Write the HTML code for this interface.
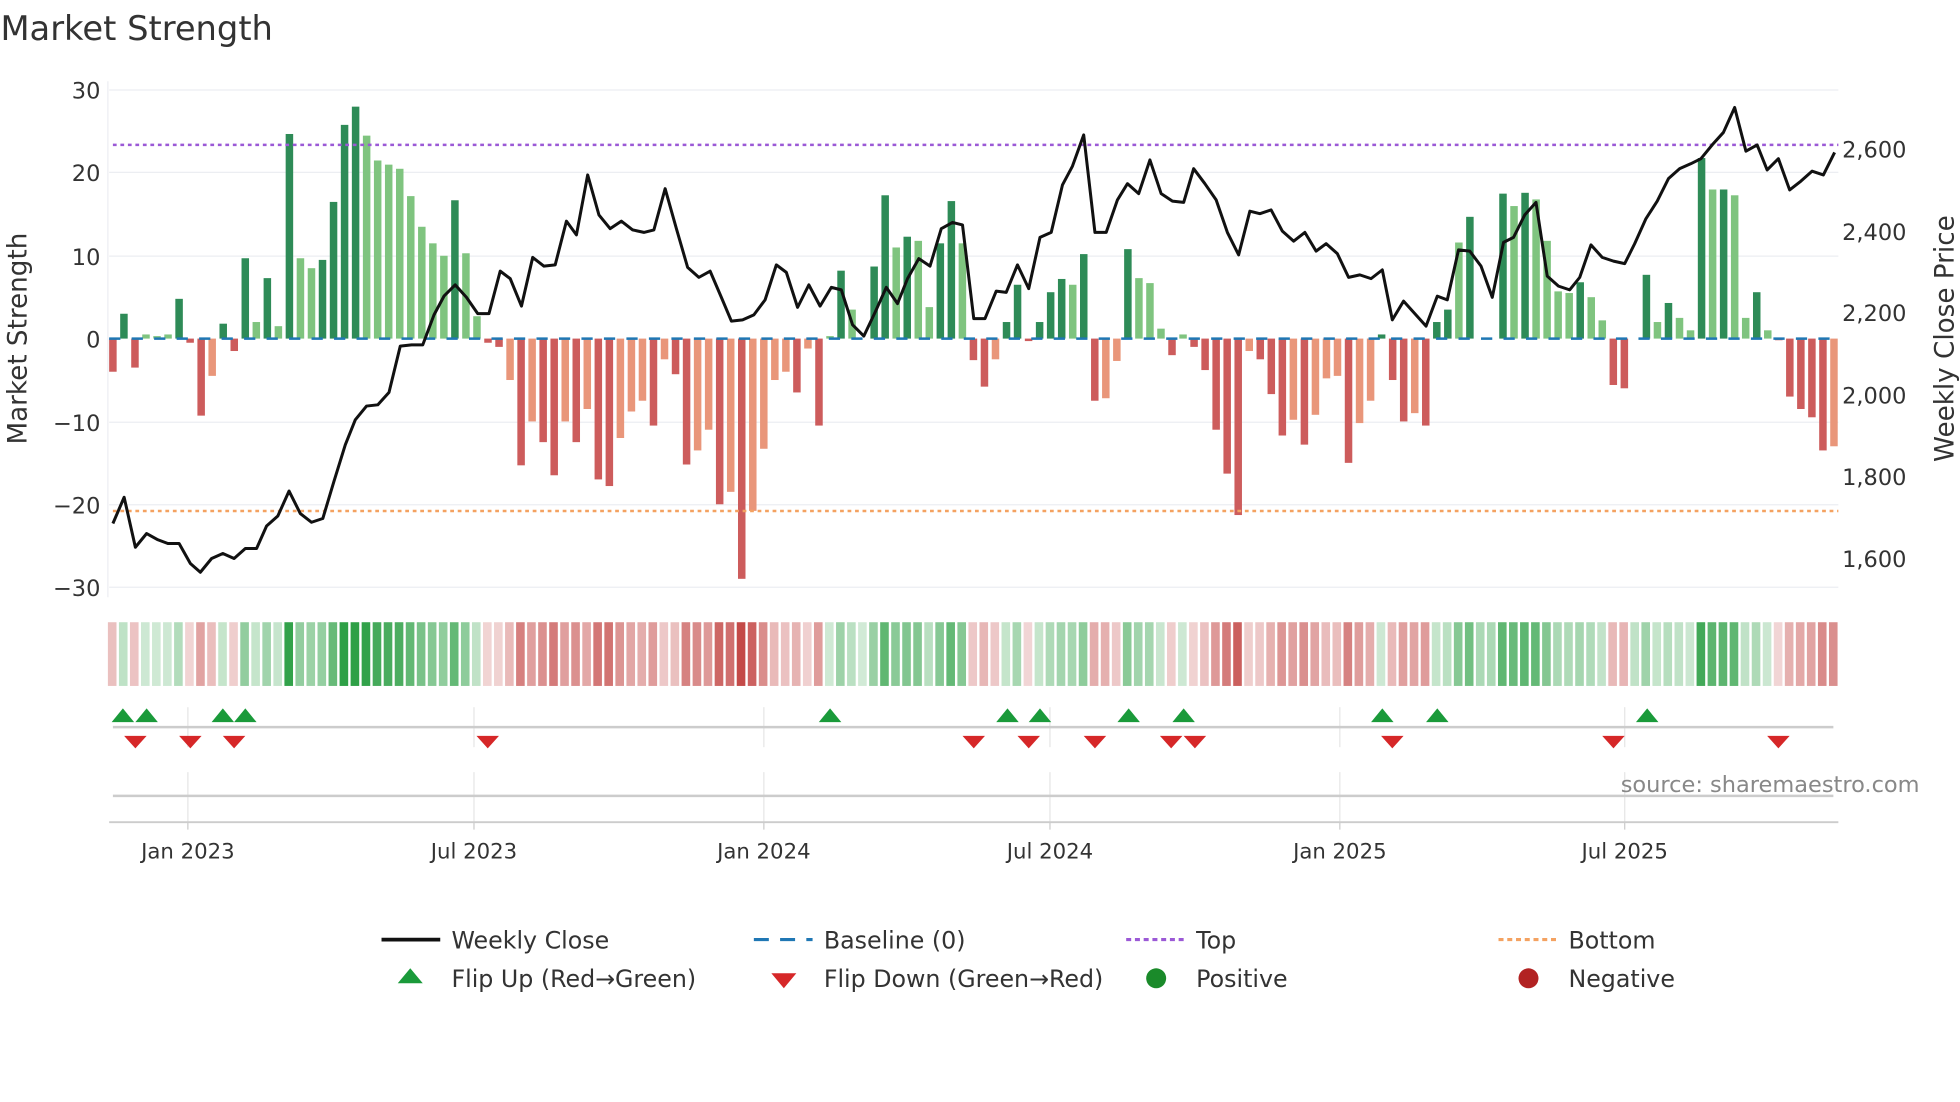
<!DOCTYPE html>
<html><head><meta charset="utf-8"><style>
html,body{margin:0;padding:0;background:#fff;}
svg{display:block;font-family:"DejaVu Sans","Liberation Sans",sans-serif;}
#bars rect{width:.68px}
.a{fill:#2e8b57}.b{fill:#7fc47f}.c{fill:#cd5c5c}.d{fill:#e9967a}
#heat rect{width:.78px;height:51px}
.G{fill:#2ea046}.R{fill:#c44a48}
</style></head><body>
<svg width="1960" height="1102" viewBox="0 0 1568 882" xmlns="http://www.w3.org/2000/svg">
<rect width="1568" height="882" fill="#fff"/>
<text x="0" y="32" font-size="27" fill="#333">Market Strength</text>
<g stroke="#eceef2" stroke-width="1">
<line x1="87" y1="72" x2="1471" y2="72"/><line x1="87" y1="138" x2="1471" y2="138"/><line x1="87" y1="205" x2="1471" y2="205"/><line x1="87" y1="338" x2="1471" y2="338"/><line x1="87" y1="404" x2="1471" y2="404"/><line x1="87" y1="470" x2="1471" y2="470"/>
<line x1="86" y1="65" x2="86" y2="478"/>
</g>
<g font-size="18" fill="#333" text-anchor="end">
<text x="80" y="79">30</text><text x="80" y="145">20</text><text x="80" y="212">10</text><text x="80" y="278">0</text><text x="80" y="345">−10</text><text x="80" y="411">−20</text><text x="80" y="477">−30</text>
</g>
<g font-size="18" fill="#333">
<text x="1474" y="126">2,600</text><text x="1474" y="192">2,400</text><text x="1474" y="257">2,200</text><text x="1474" y="323">2,000</text><text x="1474" y="388">1,800</text><text x="1474" y="454">1,600</text>
</g>
<text transform="translate(21,271) rotate(-90)" font-size="21" fill="#333" text-anchor="middle">Market Strength</text>
<text transform="translate(1563,271) rotate(-90)" font-size="21" fill="#333" text-anchor="middle">Weekly Close Price</text>
<g id="bars" transform="translate(87,271) scale(8.83,-6.63)">
<rect class="c" x="0" y="-4" height="4"/><rect class="a" x="1" y="0" height="3"/><rect class="c" x="2" y="-3.5" height="3.5"/><rect class="b" x="3" y="0" height=".5"/><rect class="b" x="4" y="0" height=".3"/><rect class="b" x="5" y="0" height=".5"/><rect class="a" x="6" y="0" height="4.8"/><rect class="c" x="7" y="-.5" height=".5"/><rect class="c" x="8" y="-9.3" height="9.3"/><rect class="d" x="9" y="-4.5" height="4.5"/>
<rect class="a" x="10" y="0" height="1.8"/><rect class="c" x="11" y="-1.5" height="1.5"/><rect class="a" x="12" y="0" height="9.7"/><rect class="b" x="13" y="0" height="2"/><rect class="a" x="14" y="0" height="7.3"/><rect class="b" x="15" y="0" height="1.5"/><rect class="a" x="16" y="0" height="24.7"/><rect class="b" x="17" y="0" height="9.7"/><rect class="b" x="18" y="0" height="8.5"/><rect class="a" x="19" y="0" height="9.5"/>
<rect class="a" x="20" y="0" height="16.5"/><rect class="a" x="21" y="0" height="25.8"/><rect class="a" x="22" y="0" height="28"/><rect class="b" x="23" y="0" height="24.5"/><rect class="b" x="24" y="0" height="21.5"/><rect class="b" x="25" y="0" height="21"/><rect class="b" x="26" y="0" height="20.5"/><rect class="b" x="27" y="0" height="17.2"/><rect class="b" x="28" y="0" height="13.5"/><rect class="b" x="29" y="0" height="11.5"/>
<rect class="b" x="30" y="0" height="10"/><rect class="a" x="31" y="0" height="16.7"/><rect class="b" x="32" y="0" height="10.3"/><rect class="b" x="33" y="0" height="2.7"/><rect class="c" x="34" y="-.5" height=".5"/><rect class="c" x="35" y="-1" height="1"/><rect class="d" x="36" y="-5" height="5"/><rect class="c" x="37" y="-15.3" height="15.3"/><rect class="d" x="38" y="-10" height="10"/><rect class="c" x="39" y="-12.5" height="12.5"/>
<rect class="c" x="40" y="-16.5" height="16.5"/><rect class="d" x="41" y="-10" height="10"/><rect class="c" x="42" y="-12.5" height="12.5"/><rect class="d" x="43" y="-8.5" height="8.5"/><rect class="c" x="44" y="-17" height="17"/><rect class="c" x="45" y="-17.8" height="17.8"/><rect class="d" x="46" y="-12" height="12"/><rect class="d" x="47" y="-8.8" height="8.8"/><rect class="d" x="48" y="-7.5" height="7.5"/><rect class="c" x="49" y="-10.5" height="10.5"/>
<rect class="d" x="50" y="-2.5" height="2.5"/><rect class="c" x="51" y="-4.3" height="4.3"/><rect class="c" x="52" y="-15.2" height="15.2"/><rect class="d" x="53" y="-13.5" height="13.5"/><rect class="d" x="54" y="-11" height="11"/><rect class="c" x="55" y="-20" height="20"/><rect class="d" x="56" y="-18.5" height="18.5"/><rect class="c" x="57" y="-29" height="29"/><rect class="d" x="58" y="-20.8" height="20.8"/><rect class="d" x="59" y="-13.3" height="13.3"/>
<rect class="d" x="60" y="-5" height="5"/><rect class="d" x="61" y="-4" height="4"/><rect class="c" x="62" y="-6.5" height="6.5"/><rect class="d" x="63" y="-1.2" height="1.2"/><rect class="c" x="64" y="-10.5" height="10.5"/><rect class="b" x="65" y="0" height=".3"/><rect class="a" x="66" y="0" height="8.2"/><rect class="b" x="67" y="0" height="3.5"/><rect class="a" x="69" y="0" height="8.7"/>
<rect class="a" x="70" y="0" height="17.3"/><rect class="b" x="71" y="0" height="11"/><rect class="a" x="72" y="0" height="12.3"/><rect class="b" x="73" y="0" height="11.8"/><rect class="b" x="74" y="0" height="3.8"/><rect class="a" x="75" y="0" height="11.5"/><rect class="a" x="76" y="0" height="16.6"/><rect class="b" x="77" y="0" height="11.5"/><rect class="c" x="78" y="-2.6" height="2.6"/><rect class="c" x="79" y="-5.8" height="5.8"/>
<rect class="d" x="80" y="-2.5" height="2.5"/><rect class="a" x="81" y="0" height="2"/><rect class="a" x="82" y="0" height="6.5"/><rect class="c" x="83" y="-.3" height=".3"/><rect class="a" x="84" y="0" height="2"/><rect class="a" x="85" y="0" height="5.6"/><rect class="a" x="86" y="0" height="7.2"/><rect class="b" x="87" y="0" height="6.5"/><rect class="a" x="88" y="0" height="10.2"/><rect class="c" x="89" y="-7.5" height="7.5"/>
<rect class="d" x="90" y="-7.2" height="7.2"/><rect class="d" x="91" y="-2.7" height="2.7"/><rect class="a" x="92" y="0" height="10.8"/><rect class="b" x="93" y="0" height="7.3"/><rect class="b" x="94" y="0" height="6.7"/><rect class="b" x="95" y="0" height="1.2"/><rect class="c" x="96" y="-2" height="2"/><rect class="b" x="97" y="0" height=".5"/><rect class="c" x="98" y="-1" height="1"/><rect class="c" x="99" y="-3.8" height="3.8"/>
<rect class="c" x="100" y="-11" height="11"/><rect class="c" x="101" y="-16.3" height="16.3"/><rect class="c" x="102" y="-21.3" height="21.3"/><rect class="d" x="103" y="-1.5" height="1.5"/><rect class="c" x="104" y="-2.5" height="2.5"/><rect class="c" x="105" y="-6.7" height="6.7"/><rect class="c" x="106" y="-11.7" height="11.7"/><rect class="d" x="107" y="-9.8" height="9.8"/><rect class="c" x="108" y="-12.8" height="12.8"/><rect class="d" x="109" y="-9.2" height="9.2"/>
<rect class="d" x="110" y="-4.8" height="4.8"/><rect class="d" x="111" y="-4.5" height="4.5"/><rect class="c" x="112" y="-15" height="15"/><rect class="d" x="113" y="-10.2" height="10.2"/><rect class="d" x="114" y="-7.5" height="7.5"/><rect class="a" x="115" y="0" height=".5"/><rect class="c" x="116" y="-5" height="5"/><rect class="c" x="117" y="-10" height="10"/><rect class="d" x="118" y="-9" height="9"/><rect class="c" x="119" y="-10.5" height="10.5"/>
<rect class="a" x="120" y="0" height="2"/><rect class="a" x="121" y="0" height="3.5"/><rect class="b" x="122" y="0" height="11.6"/><rect class="a" x="123" y="0" height="14.7"/><rect class="a" x="126" y="0" height="17.5"/><rect class="b" x="127" y="0" height="16"/><rect class="a" x="128" y="0" height="17.6"/><rect class="b" x="129" y="0" height="16.8"/>
<rect class="b" x="130" y="0" height="11.8"/><rect class="b" x="131" y="0" height="5.7"/><rect class="b" x="132" y="0" height="5.5"/><rect class="a" x="133" y="0" height="6.8"/><rect class="b" x="134" y="0" height="5"/><rect class="b" x="135" y="0" height="2.2"/><rect class="c" x="136" y="-5.6" height="5.6"/><rect class="c" x="137" y="-6" height="6"/><rect class="a" x="139" y="0" height="7.7"/>
<rect class="b" x="140" y="0" height="2"/><rect class="a" x="141" y="0" height="4.3"/><rect class="b" x="142" y="0" height="2.5"/><rect class="b" x="143" y="0" height="1"/><rect class="a" x="144" y="0" height="21.8"/><rect class="b" x="145" y="0" height="18"/><rect class="a" x="146" y="0" height="18"/><rect class="b" x="147" y="0" height="17.3"/><rect class="b" x="148" y="0" height="2.5"/><rect class="a" x="149" y="0" height="5.6"/>
<rect class="b" x="150" y="0" height="1"/><rect class="c" x="151" y="-.2" height=".2"/><rect class="c" x="152" y="-7" height="7"/><rect class="c" x="153" y="-8.5" height="8.5"/><rect class="c" x="154" y="-9.5" height="9.5"/><rect class="c" x="155" y="-13.5" height="13.5"/><rect class="d" x="156" y="-13" height="13"/>
</g>
<line x1="87" y1="271" x2="1471" y2="271" stroke="#1f77b4" stroke-width="2" stroke-dasharray="9,9"/>
<line x1="90" y1="116" x2="1471" y2="116" stroke="#9b59d6" stroke-width="2" stroke-dasharray="3,3"/>
<line x1="90" y1="409" x2="1471" y2="409" stroke="#f4a261" stroke-width="2" stroke-dasharray="3,3"/>
<polyline fill="none" stroke="#111" stroke-width="2.4" stroke-linejoin="round" points="90,419 99,398 108,438 117,427 126,432 134,435 143,435 152,451 160,458 169,447 178,443 187,447 196,439 205,439 213,421 222,413 231,393 240,411 249,418 258,415 267,385 276,356 284,336 293,325 302,324 311,314 320,277 329,276 338,276 347,252 355,237 364,228 373,238 382,251 391,251 400,217 408,223 417,245 426,206 435,213 444,212 453,177 461,188 470,140 479,172 488,183 497,177 506,184 515,186 523,184 532,151 541,183 550,214 559,222 568,217 577,238 585,257 594,256 603,252 612,240 621,212 629,218 638,246 647,228 656,245 665,230 673,232 682,260 691,269 700,250 709,230 718,243 726,223 735,207 744,213 753,183 762,178 770,180 779,255 788,255 797,233 805,234 814,212 823,231 832,190 841,186 850,148 858,133 867,108 876,186 885,186 894,160 902,147 911,155 920,128 929,155 938,161 947,162 955,135 964,147 973,160 982,186 991,204 1000,169 1008,171 1017,168 1026,185 1035,193 1044,186 1053,201 1061,195 1070,203 1079,222 1088,220 1097,223 1106,216 1114,256 1123,241 1132,251 1141,261 1150,237 1158,240 1167,200 1176,201 1185,213 1194,238 1203,194 1211,190 1220,172 1229,162 1238,221 1247,229 1256,232 1264,222 1273,196 1282,206 1291,209 1300,211 1308,195 1317,175 1326,161 1335,143 1344,135 1353,131 1361,127 1370,116 1379,106 1388,86 1397,121 1406,116 1414,136 1423,127 1432,152 1441,145 1450,137 1459,140 1468,122"/>
<g id="heat" transform="translate(86,498) scale(8.83,1)">
<rect class="R" x="0" opacity=".35"/><rect class="G" x="1" opacity=".31"/><rect class="R" x="2" opacity=".33"/><rect class="G" x="3" opacity=".24"/><rect class="G" x="4" opacity=".23"/><rect class="G" x="5" opacity=".24"/><rect class="G" x="6" opacity=".37"/><rect class="R" x="7" opacity=".24"/><rect class="R" x="8" opacity=".51"/><rect class="R" x="9" opacity=".36"/>
<rect class="G" x="10" opacity=".28"/><rect class="R" x="11" opacity=".27"/><rect class="G" x="12" opacity=".52"/><rect class="G" x="13" opacity=".28"/><rect class="G" x="14" opacity=".45"/><rect class="G" x="15" opacity=".27"/><rect class="G" x="16" opacity=".98"/><rect class="G" x="17" opacity=".52"/><rect class="G" x="18" opacity=".48"/><rect class="G" x="19" opacity=".51"/>
<rect class="G" x="20" opacity=".73"/><rect class="G" x="21" opacity="1"/><rect class="G" x="22" opacity="1"/><rect class="G" x="23" opacity=".98"/><rect class="G" x="24" opacity=".89"/><rect class="G" x="25" opacity=".87"/><rect class="G" x="26" opacity=".86"/><rect class="G" x="27" opacity=".75"/><rect class="G" x="28" opacity=".64"/><rect class="G" x="29" opacity=".58"/>
<rect class="G" x="30" opacity=".53"/><rect class="G" x="31" opacity=".74"/><rect class="G" x="32" opacity=".54"/><rect class="G" x="33" opacity=".3"/><rect class="R" x="34" opacity=".24"/><rect class="R" x="35" opacity=".25"/><rect class="R" x="36" opacity=".38"/><rect class="R" x="37" opacity=".7"/><rect class="R" x="38" opacity=".53"/><rect class="R" x="39" opacity=".61"/>
<rect class="R" x="40" opacity=".73"/><rect class="R" x="41" opacity=".53"/><rect class="R" x="42" opacity=".61"/><rect class="R" x="43" opacity=".48"/><rect class="R" x="44" opacity=".75"/><rect class="R" x="45" opacity=".77"/><rect class="R" x="46" opacity=".59"/><rect class="R" x="47" opacity=".49"/><rect class="R" x="48" opacity=".45"/><rect class="R" x="49" opacity=".55"/>
<rect class="R" x="50" opacity=".3"/><rect class="R" x="51" opacity=".35"/><rect class="R" x="52" opacity=".69"/><rect class="R" x="53" opacity=".64"/><rect class="R" x="54" opacity=".56"/><rect class="R" x="55" opacity=".84"/><rect class="R" x="56" opacity=".79"/><rect class="R" x="57" opacity="1"/><rect class="R" x="58" opacity=".87"/><rect class="R" x="59" opacity=".63"/>
<rect class="R" x="60" opacity=".38"/><rect class="R" x="61" opacity=".34"/><rect class="R" x="62" opacity=".42"/><rect class="R" x="63" opacity=".26"/><rect class="R" x="64" opacity=".55"/><rect class="G" x="65" opacity=".23"/><rect class="G" x="66" opacity=".47"/><rect class="G" x="67" opacity=".33"/><rect class="G" x="68" opacity=".22"/><rect class="G" x="69" opacity=".49"/>
<rect class="G" x="70" opacity=".76"/><rect class="G" x="71" opacity=".56"/><rect class="G" x="72" opacity=".6"/><rect class="G" x="73" opacity=".59"/><rect class="G" x="74" opacity=".34"/><rect class="G" x="75" opacity=".58"/><rect class="G" x="76" opacity=".74"/><rect class="G" x="77" opacity=".58"/><rect class="R" x="78" opacity=".3"/><rect class="R" x="79" opacity=".4"/>
<rect class="R" x="80" opacity=".3"/><rect class="G" x="81" opacity=".28"/><rect class="G" x="82" opacity=".42"/><rect class="R" x="83" opacity=".23"/><rect class="G" x="84" opacity=".28"/><rect class="G" x="85" opacity=".39"/><rect class="G" x="86" opacity=".44"/><rect class="G" x="87" opacity=".42"/><rect class="G" x="88" opacity=".54"/><rect class="R" x="89" opacity=".45"/>
<rect class="R" x="90" opacity=".44"/><rect class="R" x="91" opacity=".3"/><rect class="G" x="92" opacity=".56"/><rect class="G" x="93" opacity=".45"/><rect class="G" x="94" opacity=".43"/><rect class="G" x="95" opacity=".26"/><rect class="R" x="96" opacity=".28"/><rect class="G" x="97" opacity=".24"/><rect class="R" x="98" opacity=".25"/><rect class="R" x="99" opacity=".34"/>
<rect class="R" x="100" opacity=".56"/><rect class="R" x="101" opacity=".72"/><rect class="R" x="102" opacity=".88"/><rect class="R" x="103" opacity=".27"/><rect class="R" x="104" opacity=".3"/><rect class="R" x="105" opacity=".43"/><rect class="R" x="106" opacity=".58"/><rect class="R" x="107" opacity=".52"/><rect class="R" x="108" opacity=".62"/><rect class="R" x="109" opacity=".5"/>
<rect class="R" x="110" opacity=".37"/><rect class="R" x="111" opacity=".36"/><rect class="R" x="112" opacity=".69"/><rect class="R" x="113" opacity=".54"/><rect class="R" x="114" opacity=".45"/><rect class="G" x="115" opacity=".24"/><rect class="R" x="116" opacity=".38"/><rect class="R" x="117" opacity=".53"/><rect class="R" x="118" opacity=".5"/><rect class="R" x="119" opacity=".55"/>
<rect class="G" x="120" opacity=".28"/><rect class="G" x="121" opacity=".33"/><rect class="G" x="122" opacity=".58"/><rect class="G" x="123" opacity=".68"/><rect class="G" x="124" opacity=".4"/><rect class="G" x="125" opacity=".4"/><rect class="G" x="126" opacity=".76"/><rect class="G" x="127" opacity=".72"/><rect class="G" x="128" opacity=".77"/><rect class="G" x="129" opacity=".74"/>
<rect class="G" x="130" opacity=".59"/><rect class="G" x="131" opacity=".4"/><rect class="G" x="132" opacity=".39"/><rect class="G" x="133" opacity=".43"/><rect class="G" x="134" opacity=".38"/><rect class="G" x="135" opacity=".29"/><rect class="R" x="136" opacity=".39"/><rect class="R" x="137" opacity=".41"/><rect class="G" x="138" opacity=".3"/><rect class="G" x="139" opacity=".46"/>
<rect class="G" x="140" opacity=".28"/><rect class="G" x="141" opacity=".35"/><rect class="G" x="142" opacity=".3"/><rect class="G" x="143" opacity=".25"/><rect class="G" x="144" opacity=".9"/><rect class="G" x="145" opacity=".78"/><rect class="G" x="146" opacity=".78"/><rect class="G" x="147" opacity=".76"/><rect class="G" x="148" opacity=".3"/><rect class="G" x="149" opacity=".39"/>
<rect class="G" x="150" opacity=".25"/><rect class="R" x="151" opacity=".23"/><rect class="R" x="152" opacity=".44"/><rect class="R" x="153" opacity=".48"/><rect class="R" x="154" opacity=".51"/><rect class="R" x="155" opacity=".64"/><rect class="R" x="156" opacity=".62"/>
</g>
<g stroke="#e6e6e6" stroke-width="1">
<line x1="150" y1="566" x2="150" y2="598"/><line x1="379" y1="566" x2="379" y2="598"/><line x1="611" y1="566" x2="611" y2="598"/><line x1="840" y1="566" x2="840" y2="598"/><line x1="1072" y1="566" x2="1072" y2="598"/><line x1="1300" y1="566" x2="1300" y2="598"/>
<line x1="150" y1="618" x2="150" y2="658"/><line x1="379" y1="618" x2="379" y2="658"/><line x1="611" y1="618" x2="611" y2="658"/><line x1="840" y1="618" x2="840" y2="658"/><line x1="1072" y1="618" x2="1072" y2="658"/><line x1="1300" y1="618" x2="1300" y2="658"/>
</g>
<line x1="90" y1="582" x2="1467" y2="582" stroke="#ccc" stroke-width="2"/>
<line x1="90" y1="637" x2="1467" y2="637" stroke="#ccc" stroke-width="2"/>
<line x1="87" y1="658" x2="1471" y2="658" stroke="#ccc" stroke-width="1.5"/>
<g fill="#1a9a3a">
<path d="M98,567l9,11h-18z"/><path d="M117,567l9,11h-18z"/><path d="M178,567l9,11h-18z"/><path d="M196,567l9,11h-18z"/><path d="M664,567l9,11h-18z"/><path d="M806,567l9,11h-18z"/><path d="M832,567l9,11h-18z"/><path d="M903,567l9,11h-18z"/><path d="M947,567l9,11h-18z"/><path d="M1106,567l9,11h-18z"/><path d="M1150,567l9,11h-18z"/><path d="M1318,567l9,11h-18z"/>
</g>
<g fill="#d62728">
<path d="M99,589h18l-9,10z"/><path d="M143,589h18l-9,10z"/><path d="M178,589h18l-9,10z"/><path d="M381,589h18l-9,10z"/><path d="M770,589h18l-9,10z"/><path d="M814,589h18l-9,10z"/><path d="M867,589h18l-9,10z"/><path d="M928,589h18l-9,10z"/><path d="M947,589h18l-9,10z"/><path d="M1105,589h18l-9,10z"/><path d="M1282,589h18l-9,10z"/><path d="M1414,589h18l-9,10z"/>
</g>
<text x="1536" y="634" font-size="18" fill="#888" text-anchor="end">source: sharemaestro.com</text>
<g stroke="#ccc"><line x1="150" y1="658" x2="150" y2="664"/><line x1="379" y1="658" x2="379" y2="664"/><line x1="611" y1="658" x2="611" y2="664"/><line x1="840" y1="658" x2="840" y2="664"/><line x1="1072" y1="658" x2="1072" y2="664"/><line x1="1300" y1="658" x2="1300" y2="664"/></g>
<g font-size="17" fill="#333" text-anchor="middle">
<text x="150" y="687">Jan 2023</text><text x="379" y="687">Jul 2023</text><text x="611" y="687">Jan 2024</text><text x="840" y="687">Jul 2024</text><text x="1072" y="687">Jan 2025</text><text x="1300" y="687">Jul 2025</text>
</g>
<g font-size="19" fill="#333">
<line x1="305" y1="752" x2="352" y2="752" stroke="#111" stroke-width="3"/><text x="361" y="759">Weekly Close</text>
<line x1="603" y1="752" x2="650" y2="752" stroke="#1f77b4" stroke-width="2.5" stroke-dasharray="12,9"/><text x="659" y="759">Baseline (0)</text>
<line x1="901" y1="752" x2="948" y2="752" stroke="#9b59d6" stroke-width="2.5" stroke-dasharray="4,3"/><text x="957" y="759">Top</text>
<line x1="1199" y1="752" x2="1246" y2="752" stroke="#f4a261" stroke-width="2.5" stroke-dasharray="4,3"/><text x="1255" y="759">Bottom</text>
<path d="M328,775 L338,787 L318,787Z" fill="#1a9a3a"/><text x="361" y="790">Flip Up (Red→Green)</text>
<path d="M617,779 L637,779 L627,791Z" fill="#d62728"/><text x="659" y="790">Flip Down (Green→Red)</text>
<circle cx="925" cy="783" r="8" fill="#1a8a2a"/><text x="957" y="790">Positive</text>
<circle cx="1223" cy="783" r="8" fill="#b22222"/><text x="1255" y="790">Negative</text>
</g>
</svg>
</body></html>
